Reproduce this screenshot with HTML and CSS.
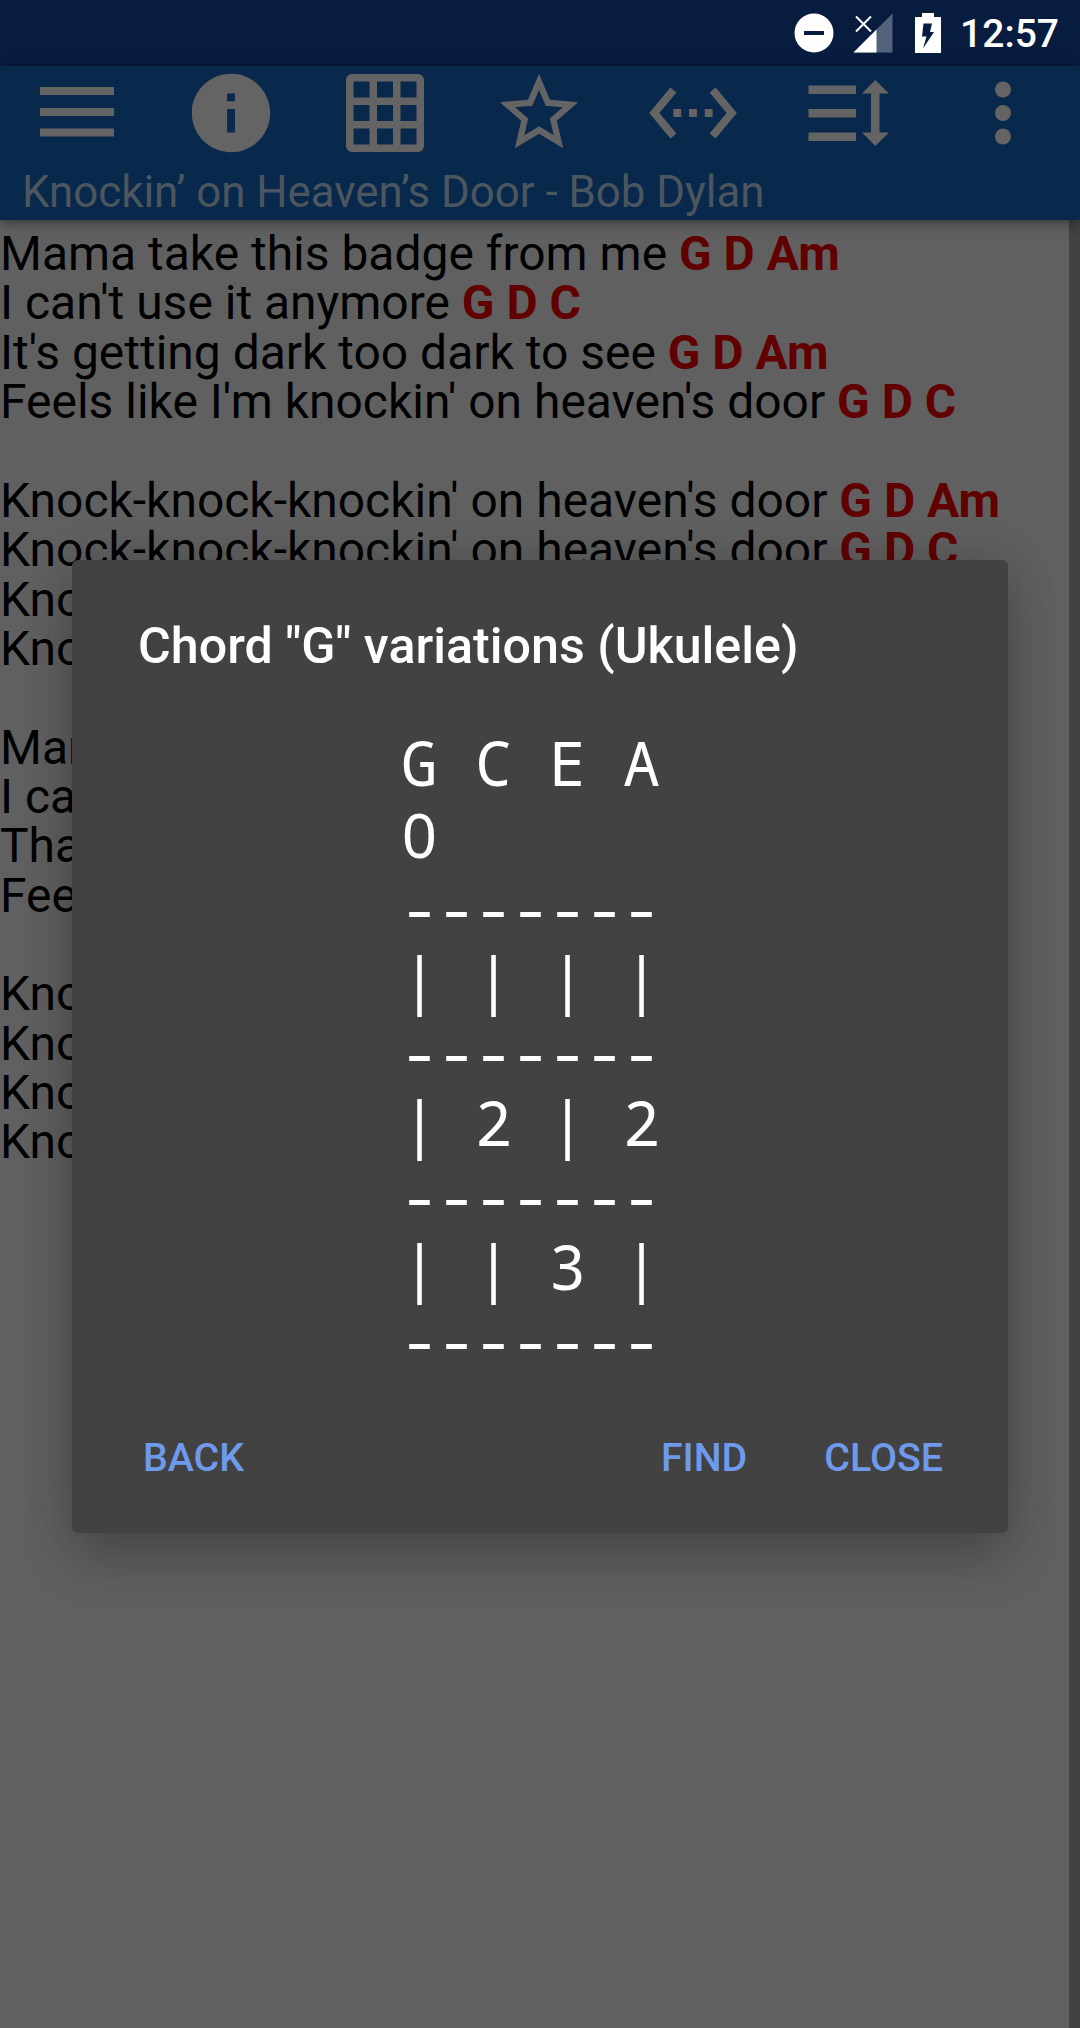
FILE: index.html
```html
<!DOCTYPE html>
<html lang="en">
<head>
<meta charset="utf-8">
<title>Chord variations</title>
<link rel="stylesheet" href="styles.css">
</head>
<body>
<div class="screen">
  <div class="status">
    <svg class="dnd" width="40" height="40" viewBox="0 0 40 40"><circle cx="20" cy="20" r="19.5" fill="#fff"/><path d="M10 18h20v4H10z" fill="#071c3f"/></svg>
    <svg class="signal" width="40" height="40" viewBox="0 0 40 40"><path d="M39.5.5v39h-39z" fill="#54637c"/><path d="M23.5 16.5v23H.5z" fill="#fff"/><path d="M3 3.500l15 15M18 3.500l-15 15" stroke="#fff" stroke-width="2" fill="none"/></svg>
    <svg class="battery" width="26" height="40" viewBox="0 0 26 40"><path d="M7 0h12v4h7v36H0V4h7z" fill="#fff"/><path d="M8.500 10.500H17L15 19h4L8 35.500 11.500 23.500H7z" fill="#071c3f"/></svg>
    <span class="clock">12:57</span>
  </div>
  <header class="appbar">
    <nav class="tools">
      <svg viewBox="0 4 94 86"><path d="M11 21h74v8H11zM11 42h74v8H11zM11 62.500h74v8H11z"/></svg>
      <svg viewBox="-1 4 94 86"><path transform="scale(3.917)" d="M12 2C6.480 2 2 6.480 2 12s4.480 10 10 10 10-4.480 10-10S17.520 2 12 2zm1 15h-2v-6h2v6zm0-8h-2V7h2v2z"/></svg>
      <svg viewBox="0 4 94 86"><path fill-rule="evenodd" d="M14 8h66a6 6 0 0 1 6 6v66a6 6 0 0 1-6 6H14a6 6 0 0 1-6-6V14a6 6 0 0 1 6-6zM15.500 15.500v16h16v-16zM39 15.500v16h16v-16zM62.500 15.500v16h16v-16zM15.500 39v16h16V39zM39 39v16h16V39zM62.500 39v16h16V39zM15.500 62.500v16h16v-16zM39 62.500v16h16v-16zM62.500 62.500v16h16v-16z"/></svg>
      <svg viewBox="0 4 94 86"><path transform="scale(3.917)" d="M22 9.240l-7.190-.62L12 2 9.190 8.630 2 9.240l5.460 4.730L5.820 21 12 17.270 18.180 21l-1.630-7.030L22 9.240zM12 15.400l-3.760 2.270 1-4.280-3.320-2.880 4.380-.38L12 6.100l1.710 4.040 4.380.38-3.320 2.880 1 4.280L12 15.400z"/></svg>
      <svg viewBox="0 4 94 86"><path transform="scale(3.917)" d="M7.770 6.760L6.230 5.480.82 12l5.410 6.520 1.540-1.280L3.420 12l4.350-5.240zM7 13h2v-2H7v2zm10-2h-2v2h2v-2zm-6 2h2v-2h-2v2zm6.770-7.520l-1.540 1.280L20.580 12l-4.350 5.240 1.540 1.280L23.180 12l-5.410-6.520z"/></svg>
      <svg viewBox="0 4 94 86"><path d="M7.500 19.500H55V28H7.500zM7.500 43H55v8.500H7.500zM7.500 66.500H55V75H7.500zM74.300 14L88 27.500h-9.500v39H88L74.300 80 61 66.500h9v-39h-9z"/></svg>
      <svg viewBox="0 4 94 86"><circle cx="48" cy="23.500" r="8"/><circle cx="48" cy="47" r="8"/><circle cx="48" cy="70.500" r="8"/></svg>
    </nav>
    <h1 class="song">Knockin’ on Heaven’s Door - Bob Dylan</h1>
  </header>
  <main class="lyrics">
    <p>Mama take this badge from me <b>G D Am</b></p>
    <p>I can't use it anymore <b>G D C</b></p>
    <p>It's getting dark too dark to see <b>G D Am</b></p>
    <p>Feels like I'm knockin' on heaven's door <b>G D C</b></p>
    <p></p>
    <p>Knock-knock-knockin' on heaven's door <b>G D Am</b></p>
    <p>Knock-knock-knockin' on heaven's door <b>G D C</b></p>
    <p>Knoc</p>
    <p>Knoc</p>
    <p></p>
    <p>Mam</p>
    <p>I can</p>
    <p>That</p>
    <p>Feel</p>
    <p></p>
    <p>Knoc</p>
    <p>Knoc</p>
    <p>Knoc</p>
    <p>Knoc</p>
  </main>
  <section class="dialog">
    <h2 class="dialog-title">Chord "G" variations (Ukulele)</h2>
    <div class="chart">
      <div class="row">G C E A</div>
      <div class="row open">0</div>
      <div class="row fret">-------</div>
      <div class="row">| | | |</div>
      <div class="row fret">-------</div>
      <div class="row">| 2 | 2</div>
      <div class="row fret">-------</div>
      <div class="row">| | 3 |</div>
      <div class="row fret">-------</div>
    </div>
    <div class="actions">
      <span class="action">BACK</span>
      <span class="action find">FIND</span>
      <span class="action">CLOSE</span>
    </div>
  </section>
</div>
</body>
</html>
```
FILE: styles.css
```css
* { box-sizing: border-box; }
body { margin: 0; font-family: Roboto, "Noto Sans", sans-serif; background: #606060; }
h1, h2, p { margin: 0; }
.screen { position: relative; width: 1080px; height: 2028px; overflow: hidden; display: flex; flex-direction: column; }

.status { height: 66px; flex: none; background: #071c3f; display: flex; align-items: flex-start; justify-content: flex-end; padding: 13px 21px 0 0; }
.status svg { flex: none; }
.signal { margin-left: 19px; }
.battery { margin-left: 22px; }
.clock { margin-left: 19px; color: #fff; font-weight: 500; font-size: 39px; line-height: 42px; }

.appbar { position: relative; z-index: 1; height: 154px; flex: none; background: #08284c; padding-top: 4px; box-shadow: 0 3px 12px rgba(0, 0, 0, .42); }
.tools { display: grid; grid-template-columns: repeat(7, 1fr); justify-items: center; margin: 0 1px 0 -1px; }
.tools svg { display: block; width: 94px; height: 86px; fill: #646464; }
.song { margin-top: 10px; padding-left: 22px; font-size: 43.85px; line-height: 52px; font-weight: 400; color: #4b565f; white-space: nowrap; }

.lyrics { flex: 1; padding-top: 9px; border-right: 11px solid #424242; background: #606060; color: #000; font-size: 47.97px; line-height: 49.37px; white-space: nowrap; }
.lyrics p { height: 49.37px; }
.lyrics b { color: #600000; font-weight: 700; }

.dialog { position: absolute; z-index: 2; left: 72px; top: 560px; width: 936px; height: 973px; border-radius: 6px; background: #424242; box-shadow: 0 28px 54px rgba(0, 0, 0, .2), 0 0 50px rgba(0, 0, 0, .14); display: flex; flex-direction: column; }
.dialog-title { padding: 56px 0 0 66px; font-size: 50.2px; line-height: 60px; font-weight: 500; color: #fff; white-space: nowrap; }
.chart { margin: 50px 0 0 329px; color: #fff; font-family: "Noto Sans Mono", "DejaVu Sans Mono", monospace; font-size: 61.67px; }
.row { height: 72px; line-height: 72px; white-space: pre; }
.open { width: 37px; text-align: center; font-family: "Noto Sans", "Open Sans", sans-serif; }
.fret { line-height: 74px; text-shadow: -1px 0 #fff, 1px 0 #fff; }
.actions { margin-top: 61px; padding: 0 65px 0 71px; display: flex; color: #6f9aec; font-size: 39.3px; font-weight: 500; line-height: 46px; }
.find { margin-left: auto; margin-right: 77px; }
```
